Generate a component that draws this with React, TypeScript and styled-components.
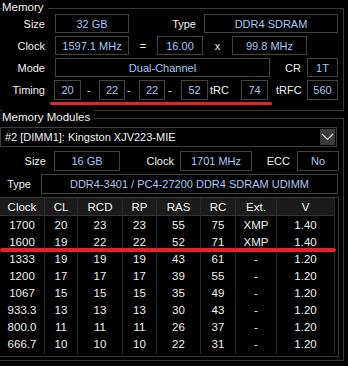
import React from 'react';
import styled, { createGlobalStyle } from 'styled-components';

const Global = createGlobalStyle`
  html, body { margin: 0; padding: 0; background: #000; }
  body {
    font-family: "Liberation Sans", Arial, sans-serif;
    font-size: 11px;
    color: #ececec;
  }
  * { box-sizing: border-box; }
`;

const Page = styled.div`
  width: 348px;
  height: 366px;
  overflow: hidden;
  background: #000;
  padding-top: 8px;
`;

const Group = styled.section<{ $h: number; $mt?: number }>`
  position: relative;
  width: 344px;
  height: ${p => p.$h}px;
  margin-top: ${p => p.$mt ?? 0}px;
  border: 1px solid #3a3a3a;
  border-left: none;
  display: flex;
  flex-direction: column;
`;

const Legend = styled.div`
  position: absolute;
  top: -9px;
  left: 2px;
  height: 14px;
  line-height: 14px;
  padding-right: 4px;
  background: #000;
  color: #f2f2f2;
  font-size: 11.5px;
`;

const Rows = styled.div`
  display: flex;
  flex-direction: column;
  gap: 3px;
  padding-top: 5px;
`;

const Row = styled.div<{ $h?: number }>`
  display: flex;
  align-items: stretch;
  height: ${p => p.$h ?? 19}px;
`;

const Label = styled.div<{ $w: number; $align?: string; $pl?: number }>`
  width: ${p => p.$w}px;
  flex: none;
  display: flex;
  align-items: center;
  justify-content: ${p => p.$align ?? 'flex-end'};
  padding-left: ${p => p.$pl ?? 0}px;
  color: #f0f0f0;
  white-space: nowrap;
`;

const Field = styled.div<{ $w: number; $ml?: number }>`
  width: ${p => p.$w}px;
  margin-left: ${p => p.$ml ?? 0}px;
  flex: none;
  border: 1px solid #424242;
  display: flex;
  align-items: center;
  justify-content: center;
  color: #a9c8f5;
  white-space: nowrap;
`;

const Underline = styled.div<{ $ml: number; $w: number; $mt: number }>`
  margin-left: ${p => p.$ml}px;
  margin-top: ${p => p.$mt}px;
  width: ${p => p.$w}px;
  height: 3px;
  border-radius: 2px;
  background: #e8202a;
`;

const Select = styled.div`
  margin-top: 8px;
  width: 337px;
  height: 20px;
  border: 1px solid #3e3e3e;
  display: flex;
  align-items: center;
  padding-left: 4px;
  color: #f2f2f2;
`;

const SelectText = styled.span`
  flex: 1;
  white-space: nowrap;
`;

const SelectButton = styled.div`
  width: 15px;
  height: 16px;
  margin-right: 1px;
  background: #3a3a3a;
  display: flex;
  align-items: center;
  justify-content: center;
`;

const ModRows = styled.div`
  display: flex;
  flex-direction: column;
  gap: 3px;
  margin-top: 4px;
`;

const Table = styled.div`
  position: relative;
  margin-top: 3px;
  width: 339px;
  height: 160px;
  border: 1px solid #3a3a3a;
  border-left: none;
  display: flex;
  padding-right: 3px;
  padding-bottom: 2px;
`;

const Column = styled.div<{ $w: number }>`
  width: ${p => p.$w}px;
  flex: none;
  border-right: 1px solid #262a30;
  display: flex;
  flex-direction: column;
`;

const HeadCell = styled.div`
  height: 18px;
  flex: none;
  background: #1b1b1b;
  border-bottom: 1px solid #333;
  display: flex;
  align-items: center;
  justify-content: center;
  color: #f4f4f4;
  font-size: 11.5px;
`;

const Cell = styled.div`
  height: 17px;
  flex: none;
  display: flex;
  align-items: center;
  justify-content: center;
  color: #f0f0f0;
  font-size: 11.5px;
`;

const Marker = styled.div`
  position: absolute;
  left: 0;
  top: 50px;
  width: 336px;
  height: 4px;
  border-radius: 2px;
  background: #e8202a;
`;

const columns: { name: string; w: number; key: number }[] = [
  { name: 'Clock', w: 45, key: 0 },
  { name: 'CL', w: 33, key: 1 },
  { name: 'RCD', w: 45, key: 2 },
  { name: 'RP', w: 34, key: 3 },
  { name: 'RAS', w: 44, key: 4 },
  { name: 'RC', w: 35, key: 5 },
  { name: 'Ext.', w: 41, key: 6 },
  { name: 'V', w: 58, key: 7 },
];

const data: string[][] = [
  ['1700', '20', '23', '23', '55', '75', 'XMP', '1.40'],
  ['1600', '19', '22', '22', '52', '71', 'XMP', '1.40'],
  ['1333', '19', '19', '19', '43', '61', '-', '1.20'],
  ['1200', '17', '17', '17', '39', '55', '-', '1.20'],
  ['1067', '15', '15', '15', '35', '49', '-', '1.20'],
  ['933.3', '13', '13', '13', '30', '43', '-', '1.20'],
  ['800.0', '11', '11', '11', '26', '37', '-', '1.20'],
  ['666.7', '10', '10', '10', '22', '31', '-', '1.20'],
];

export default function App() {
  return (
    <Page>
      <Global />
      <Group $h={103}>
        <Legend>Memory</Legend>
        <Rows>
          <Row>
            <Label $w={45}>Size</Label>
            <Field $w={74} $ml={10}>32 GB</Field>
            <Label $w={67}>Type</Label>
            <Field $w={134} $ml={8}>DDR4 SDRAM</Field>
          </Row>
          <Row>
            <Label $w={45}>Clock</Label>
            <Field $w={74} $ml={10}>1597.1 MHz</Field>
            <Label $w={28} $align="center">=</Label>
            <Field $w={46}>16.00</Field>
            <Label $w={29} $align="center">x</Label>
            <Field $w={75}>99.8 MHz</Field>
          </Row>
          <Row>
            <Label $w={45}>Mode</Label>
            <Field $w={215} $ml={10}>Dual-Channel</Field>
            <Label $w={31}>CR</Label>
            <Field $w={31} $ml={6}>1T</Field>
          </Row>
          <Row $h={20}>
            <Label $w={45}>Timing</Label>
            <Field $w={27} $ml={9}>20</Field>
            <Label $w={18} $align="flex-start" $pl={6}>-</Label>
            <Field $w={26}>22</Field>
            <Label $w={14} $align="flex-start" $pl={2}>-</Label>
            <Field $w={26}>22</Field>
            <Label $w={16} $align="flex-start" $pl={3}>-</Label>
            <Field $w={27}>52</Field>
            <Label $w={33} $align="flex-start" $pl={2}>tRC</Label>
            <Field $w={27}>74</Field>
            <Label $w={39} $align="flex-start" $pl={8}>tRFC</Label>
            <Field $w={31}>560</Field>
          </Row>
        </Rows>
        <Underline $ml={50} $w={222} $mt={2} />
      </Group>

      <Group $h={243} $mt={7}>
        <Legend>Memory Modules</Legend>
        <Select>
          <SelectText>#2 [DIMM1]: Kingston XJV223-MIE</SelectText>
          <SelectButton>
            <svg width="13" height="8" viewBox="0 0 13 8">
              <polyline points="1,1 6.5,6.5 12,1" fill="none" stroke="#d8d8d8" strokeWidth="1.2" />
            </svg>
          </SelectButton>
        </Select>
        <ModRows>
          <Row $h={20}>
            <Label $w={46}>Size</Label>
            <Field $w={66} $ml={8}>16 GB</Field>
            <Label $w={54}>Clock</Label>
            <Field $w={72} $ml={6}>1701 MHz</Field>
            <Label $w={38}>ECC</Label>
            <Field $w={42} $ml={7}>No</Field>
          </Row>
          <Row $h={20}>
            <Label $w={31}>Type</Label>
            <Field $w={297} $ml={10}>DDR4-3401 / PC4-27200 DDR4 SDRAM UDIMM</Field>
          </Row>
        </ModRows>
        <Table>
          {columns.map(col => (
            <Column key={col.key} $w={col.w}>
              <HeadCell>{col.name}</HeadCell>
              {data.map((r, i) => (
                <Cell key={i}>{r[col.key]}</Cell>
              ))}
            </Column>
          ))}
          <Marker />
        </Table>
      </Group>
    </Page>
  );
}
